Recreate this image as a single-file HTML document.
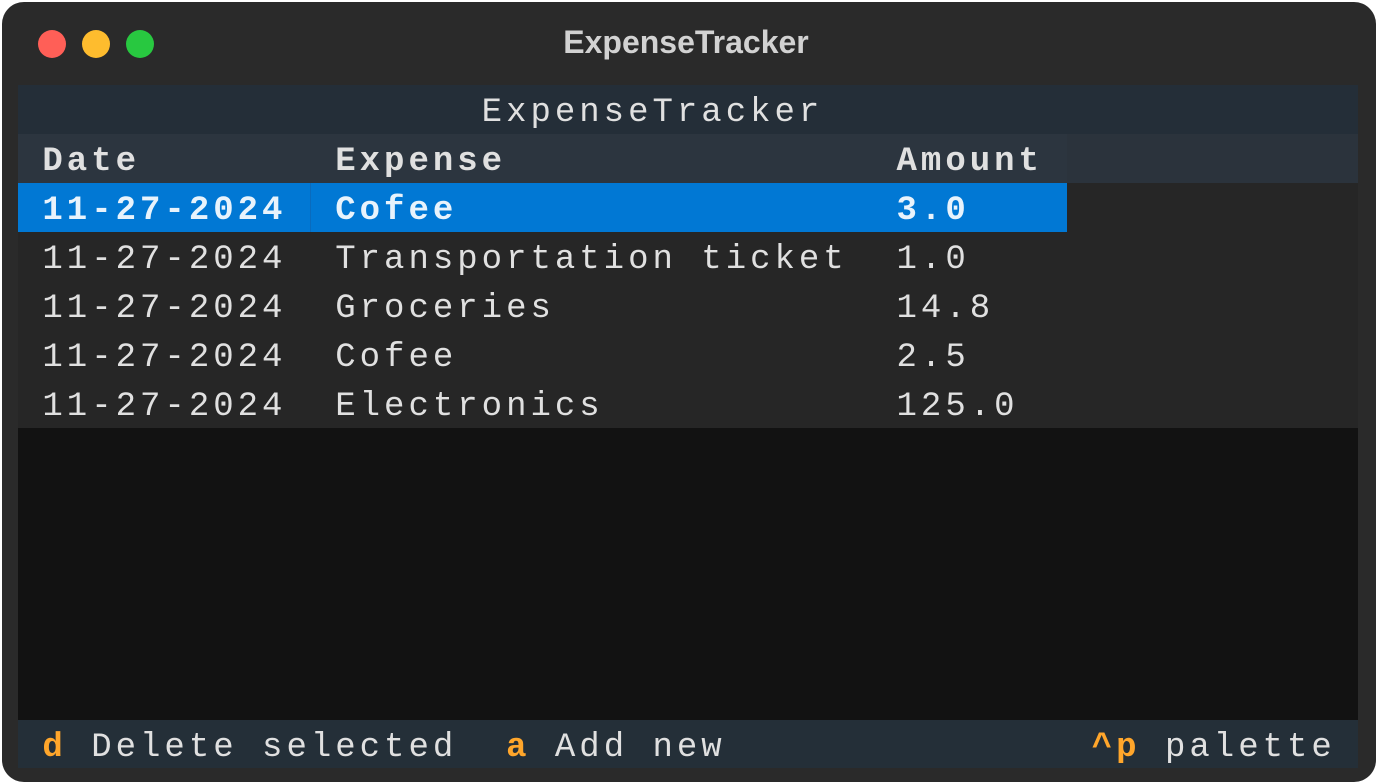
<!DOCTYPE html>
<html><head><meta charset="utf-8"><style>
*{margin:0;padding:0;box-sizing:border-box}
body{width:1378px;height:784px;background:#fff;position:relative;overflow:hidden}
.win{position:absolute;left:2px;top:2px;width:1374px;height:780px;background:#2a2a2a;border-radius:22px}
.dot{position:absolute;top:30px;width:28px;height:28px;border-radius:50%}
.title{position:absolute;left:0;width:1372px;top:24px;text-align:center;font:bold 32px "Liberation Sans",sans-serif;color:#d2d2d2}
.term{position:absolute;left:18px;top:85px;width:1340px;height:683px;background:#121212;overflow:hidden}
.r{position:absolute;left:0;height:49px;width:1340px;font-family:"Liberation Mono",monospace;font-size:34px;letter-spacing:4px;line-height:56px;white-space:pre;color:#e0e0e0;overflow:hidden}
.b{font-weight:bold}
.o{color:#ffa62b;font-weight:bold}
</style></head><body>
<div class="win"></div>
<div class="dot" style="left:38px;background:#ff5f57"></div>
<div class="dot" style="left:82px;background:#febc2e"></div>
<div class="dot" style="left:126px;background:#28c840"></div>
<div class="title">ExpenseTracker</div>
<div class="term">
<div class="r" style="top:0;background:#242e38">                   ExpenseTracker</div>
<div class="r" style="top:49px;background:#2b333c"></div>
<div class="r b" style="top:49px;width:1049px;background:#2c353f"> Date        Expense                Amount</div>
<div class="r" style="top:98px;height:245px;background:#262626"></div>
<div class="r b" style="top:98px;width:1049px;background:#0178d4;color:#e8f3fc"> 11-27-2024  Cofee                  3.0</div>
<div style="position:absolute;left:292px;top:98px;width:1px;height:49px;background:#0a6bbd"></div>
<div class="r" style="top:147px"> 11-27-2024  Transportation ticket  1.0</div>
<div class="r" style="top:196px"> 11-27-2024  Groceries              14.8</div>
<div class="r" style="top:245px"> 11-27-2024  Cofee                  2.5</div>
<div class="r" style="top:294px"> 11-27-2024  Electronics            125.0</div>
<div class="r" style="top:635px;height:48px;background:#242f38"> <span class="o">d</span> Delete selected  <span class="o">a</span> Add new               <span class="o">^p</span> palette</div>
</div>
</body></html>
